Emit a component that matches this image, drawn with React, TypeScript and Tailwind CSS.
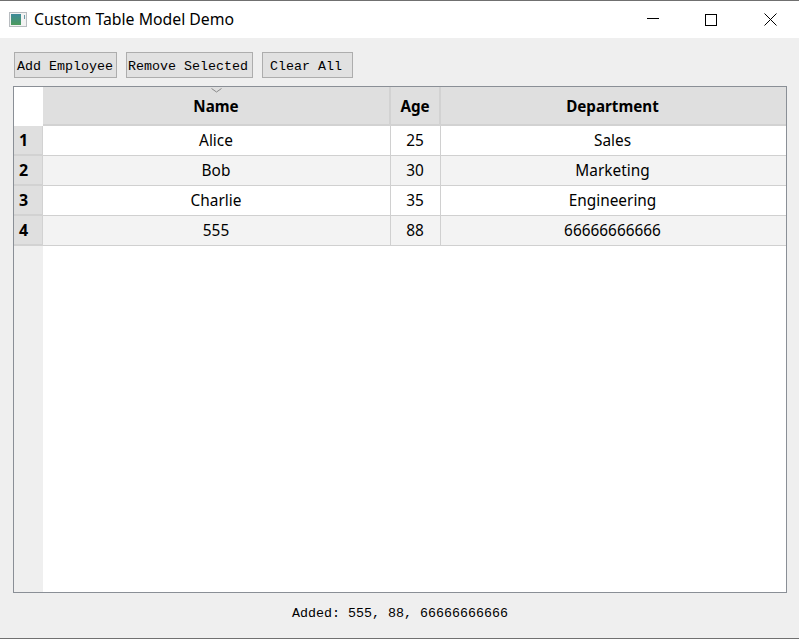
const rows = [
  ["1", "Alice", "25", "Sales"],
  ["2", "Bob", "30", "Marketing"],
  ["3", "Charlie", "35", "Engineering"],
  ["4", "555", "88", "66666666666"],
];

const mono = "font-['Liberation_Mono',monospace] text-[13.33px] text-black";

function Btn({ label, cls }: { label: string; cls: string }) {
  return (
    <div className={`${cls} h-[26px] pt-[4px] border border-[#adadad] bg-[#e1e1e1] flex items-center justify-center ${mono}`}>
      {label}
    </div>
  );
}

export default function App() {
  return (
    <div className="w-[799px] h-[639px] flex flex-col bg-[#efefef] border-t border-b border-[#707070] font-['Noto_Sans',sans-serif] text-black overflow-hidden">
      <div className="h-[37px] bg-white flex items-center shrink-0">
        <svg width="18" height="15" viewBox="0 0 18 15" className="ml-[9px]">
          <rect x="0.5" y="0.5" width="17" height="14" fill="#f2f2f2" stroke="#b8bcc0" />
          <defs>
            <linearGradient id="g" x1="0" y1="0" x2="0" y2="1">
              <stop offset="0" stopColor="#3d8a9a" />
              <stop offset="1" stopColor="#4c9a5c" />
            </linearGradient>
          </defs>
          <rect x="2" y="2" width="10" height="11" fill="url(#g)" />
          <rect x="15" y="3" width="1" height="4" fill="#6a9aa8" />
        </svg>
        <span className="ml-[7px] text-[15.8px] leading-none">Custom Table Model Demo</span>
        <div className="ml-auto flex items-center h-full">
          <svg width="12" height="12" viewBox="0 0 12 12" className="mr-[46px]">
            <path d="M0 4.5H12" stroke="#000" strokeWidth="1" />
          </svg>
          <svg width="12" height="12" viewBox="0 0 12 12" className="mr-[47px]">
            <rect x="0.5" y="0.5" width="11" height="11" fill="none" stroke="#000" />
          </svg>
          <svg width="13" height="13" viewBox="0 0 13 13" className="mr-[22px]">
            <path d="M0.5 0.5L12.5 12.5M12.5 0.5L0.5 12.5" stroke="#000" strokeWidth="1" />
          </svg>
        </div>
      </div>

      <div className="flex pl-[14px] pt-[14px] shrink-0">
        <Btn label="Add Employee" cls="w-[103px] pr-[1px]" />
        <Btn label="Remove Selected" cls="w-[127px] ml-[9px] pr-[3px]" />
        <Btn label="Clear All" cls="w-[91px] ml-[9px] pr-[3px]" />
      </div>

      <div className="mx-[13px] mt-[8px] h-[507px] w-[774px] border border-[#8a8f96] bg-white flex flex-col shrink-0">
        <div className="grid grid-cols-[29px_348px_50px_345px] h-[39px] shrink-0">
          <div className="bg-white" />
          <div className="relative bg-[#dfdfdf] border-r-2 border-b-2 border-[#d2d2d2] pt-[2px] flex items-center justify-center font-bold text-[15.2px]">
            <svg width="11" height="5" viewBox="0 0 11 5" className="absolute top-[1px] left-[168px]">
              <path d="M0.5 0.5L5.5 4L10.5 0.5" fill="none" stroke="#8a8a8a" />
            </svg>
            Name
          </div>
          <div className="bg-[#dfdfdf] border-r-2 border-b-2 border-[#d2d2d2] pt-[2px] flex items-center justify-center font-bold text-[15.2px]">Age</div>
          <div className="bg-[#dfdfdf] border-b-2 border-[#d2d2d2] pt-[2px] pr-[2px] flex items-center justify-center font-bold text-[15.2px]">Department</div>
        </div>
        {rows.map((r, i) => (
          <div key={r[0]} className="grid grid-cols-[29px_348px_50px_345px] h-[30px] shrink-0">
            <div className="bg-[#dfdfdf] border-r border-b-2 border-[#d2d2d2] flex items-center pl-[5px] font-bold text-[16px]">{r[0]}</div>
            {r.slice(1).map((c, j) => (
              <div
                key={j}
                className={`${i % 2 ? "bg-[#f3f3f3]" : "bg-white"} border-b border-[#d0d0d0] ${j < 2 ? "border-r pr-[1px]" : "pr-[2px]"} flex items-center justify-center text-[15.4px]`}
              >
                {c}
              </div>
            ))}
          </div>
        ))}
        <div className="flex-1 flex min-h-0">
          <div className="w-[29px] bg-[#efefef]" />
          <div className="flex-1 bg-white" />
        </div>
      </div>

      <div className={`flex-1 flex items-center justify-center pl-[1px] pb-[4px] ${mono}`}>Added: 555, 88, 66666666666</div>
    </div>
  );
}
